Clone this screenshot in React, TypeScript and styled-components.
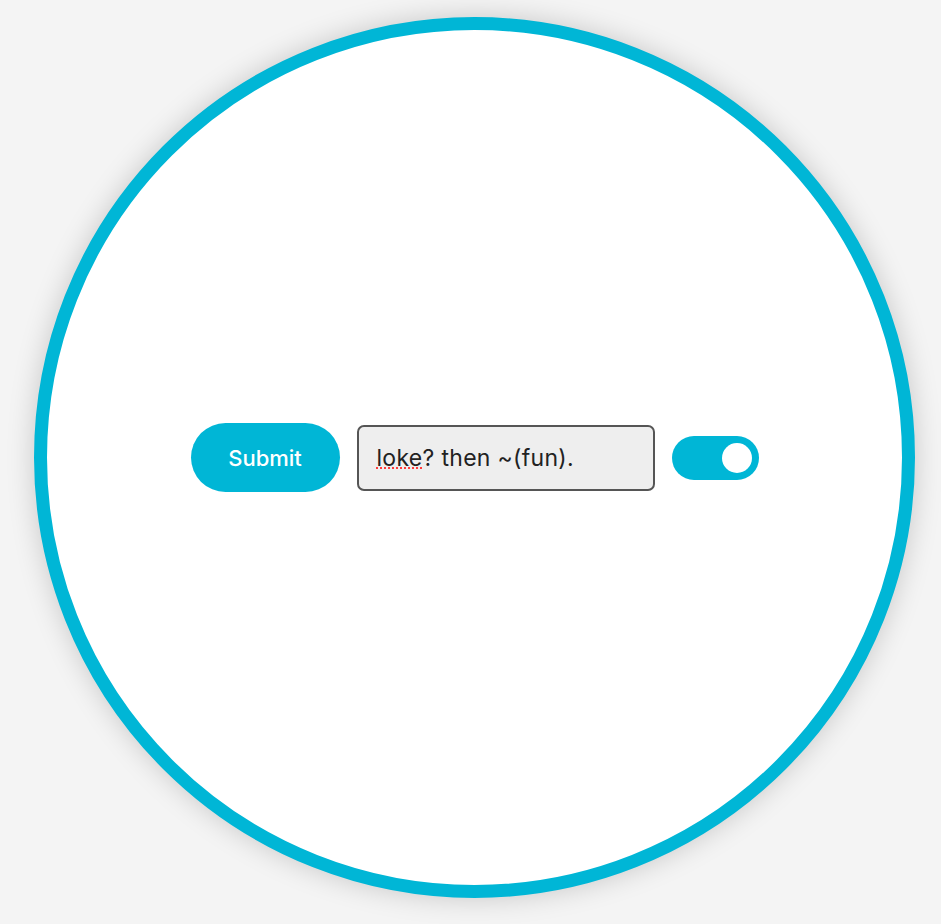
import React from "react";
import styled, { createGlobalStyle } from "styled-components";

const Global = createGlobalStyle`
  html, body { margin: 0; padding: 0; background: #f4f4f4; }
  body { font-family: "Inter", "Liberation Sans", sans-serif; }
`;

const Page = styled.div`
  width: 941px;
  height: 924px;
  box-sizing: border-box;
  padding: 17px 0 0 34px;
  overflow: hidden;
`;

const Circle = styled.div`
  width: 881px;
  height: 881px;
  box-sizing: border-box;
  border-radius: 50%;
  border: 13px solid #00b6d6;
  background: #ffffff;
  box-shadow: 0 0 28px rgba(0, 0, 0, 0.18);
  display: flex;
  align-items: center;
  justify-content: center;
`;

const Row = styled.div`
  display: flex;
  align-items: center;
  gap: 17px;
`;

const Button = styled.button`
  width: 149px;
  height: 69px;
  border: none;
  border-radius: 35px;
  background: #00b6d6;
  color: #ffffff;
  font-family: "Inter", "Liberation Sans", sans-serif;
  font-size: 22px;
  font-weight: 500;
  padding: 0;
  cursor: pointer;
`;

const Field = styled.div`
  width: 298px;
  height: 66px;
  box-sizing: border-box;
  border: 2px solid #555555;
  border-radius: 7px;
  background: #eeeeee;
  display: flex;
  align-items: center;
  padding-left: 18px;
  font-size: 23px;
  letter-spacing: 0.3px;
  color: #222222;
  font-family: "Inter", "Liberation Sans", sans-serif;
  white-space: pre;
`;

const Misspelled = styled.span`
  text-decoration-line: underline;
  text-decoration-style: dotted;
  text-decoration-color: #ff3b3b;
  text-decoration-thickness: 1.5px;
  text-underline-offset: 2px;
`;

const Toggle = styled.div`
  width: 87px;
  height: 44px;
  border-radius: 22px;
  background: #00b6d6;
  display: flex;
  align-items: center;
  justify-content: flex-end;
  padding-right: 7px;
  box-sizing: border-box;
`;

const Knob = styled.div`
  width: 30px;
  height: 30px;
  border-radius: 50%;
  background: #ffffff;
`;

export default function App() {
  return (
    <>
      <Global />
      <Page>
        <Circle>
          <Row>
            <Button>Submit</Button>
            <Field>
              <Misspelled>loke</Misspelled>? then ~(fun).
            </Field>
            <Toggle>
              <Knob />
            </Toggle>
          </Row>
        </Circle>
      </Page>
    </>
  );
}
